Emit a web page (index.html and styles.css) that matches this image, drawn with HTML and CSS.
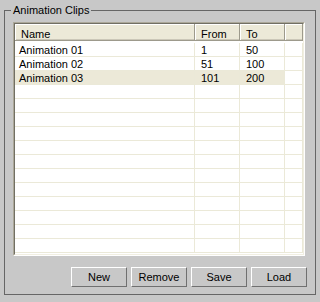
FILE: index.html
```html
<!DOCTYPE html>
<html>
<head>
<meta charset="utf-8">
<link rel="stylesheet" href="styles.css">
</head>
<body>
<fieldset class="group">
  <legend class="group-title">Animation Clips</legend>
  <div class="list">
    <div class="list-inner">
      <div class="hdr">
        <div class="hc c-name">Name</div>
        <div class="hc c-from">From</div>
        <div class="hc c-to">To</div>
        <div class="hc c-rest"></div>
      </div>
      <div class="rows">
        <div class="row"><div class="cell c-name first">Animation 01</div><div class="cell c-from">1</div><div class="cell c-to">50</div><div class="cell c-rest"></div></div>
        <div class="row"><div class="cell c-name first">Animation 02</div><div class="cell c-from">51</div><div class="cell c-to">100</div><div class="cell c-rest"></div></div>
        <div class="row sel"><div class="cell c-name first">Animation 03</div><div class="cell c-from">101</div><div class="cell c-to">200</div><div class="cell c-rest"></div></div>
        <div class="row"><div class="cell c-name"></div><div class="cell c-from"></div><div class="cell c-to"></div><div class="cell c-rest"></div></div>
        <div class="row"><div class="cell c-name"></div><div class="cell c-from"></div><div class="cell c-to"></div><div class="cell c-rest"></div></div>
        <div class="row"><div class="cell c-name"></div><div class="cell c-from"></div><div class="cell c-to"></div><div class="cell c-rest"></div></div>
        <div class="row"><div class="cell c-name"></div><div class="cell c-from"></div><div class="cell c-to"></div><div class="cell c-rest"></div></div>
        <div class="row"><div class="cell c-name"></div><div class="cell c-from"></div><div class="cell c-to"></div><div class="cell c-rest"></div></div>
        <div class="row"><div class="cell c-name"></div><div class="cell c-from"></div><div class="cell c-to"></div><div class="cell c-rest"></div></div>
        <div class="row"><div class="cell c-name"></div><div class="cell c-from"></div><div class="cell c-to"></div><div class="cell c-rest"></div></div>
        <div class="row"><div class="cell c-name"></div><div class="cell c-from"></div><div class="cell c-to"></div><div class="cell c-rest"></div></div>
        <div class="row"><div class="cell c-name"></div><div class="cell c-from"></div><div class="cell c-to"></div><div class="cell c-rest"></div></div>
        <div class="row"><div class="cell c-name"></div><div class="cell c-from"></div><div class="cell c-to"></div><div class="cell c-rest"></div></div>
        <div class="row"><div class="cell c-name"></div><div class="cell c-from"></div><div class="cell c-to"></div><div class="cell c-rest"></div></div>
        <div class="row"><div class="cell c-name"></div><div class="cell c-from"></div><div class="cell c-to"></div><div class="cell c-rest"></div></div>
      </div>
    </div>
  </div>
  <div class="buttons">
    <button class="btn">New</button>
    <button class="btn">Remove</button>
    <button class="btn">Save</button>
    <button class="btn">Load</button>
  </div>
</fieldset>
</body>
</html>
```
FILE: styles.css
```css
html, body {
  margin: 0;
  background: #c8c8c8;
}
body {
  padding: 4px 0 0 4px;
  font: 11px "Liberation Sans", Arial, sans-serif;
  color: #000;
  overflow: hidden;
  height: 302px;
  box-sizing: border-box;
}
.group {
  margin: 0;
  width: 312px;
  box-sizing: border-box;
  border: 1px solid #666;
  padding: 5px 8px 7px 8px;
  min-width: 0;
}
.group-title {
  padding: 0 2px;
  margin-left: -2px;
  line-height: 13px;
}
.list {
  width: 292px;
  height: 234px;
  box-sizing: border-box;
  border: 1px solid;
  border-color: #aca899 #fff #fff #aca899;
}
.list-inner {
  height: 100%;
  box-sizing: border-box;
  border: 1px solid;
  border-color: #716f64 #f1efe2 #f1efe2 #716f64;
  background: #fff;
  overflow: hidden;
}
.hdr {
  display: flex;
  height: 17px;
}
.hc {
  box-sizing: border-box;
  height: 17px;
  background: #ece9d8;
  border-right: 1px solid #9d9a8c;
  border-bottom: 1px solid #9d9a8c;
  box-shadow: inset 1px 1px #fff, inset 0 -1px #cbc7b8;
  padding: 4px 0 0 6px;
  line-height: 12px;
  white-space: nowrap;
}
.c-name { width: 180px; flex: none; }
.c-from { width: 45px; flex: none; }
.c-to { width: 45px; flex: none; }
.c-rest { flex: 1; }
.rows {
  padding-top: 2px;
}
.row {
  display: flex;
  height: 14px;
}
.cell {
  box-sizing: border-box;
  height: 14px;
  border-right: 1px solid #ebe9d8;
  border-bottom: 1px solid #ebe9d8;
  padding: 1px 0 0 6px;
  line-height: 13px;
  white-space: nowrap;
}
.cell.first {
  padding-left: 4px;
}
.row.sel .c-name,
.row.sel .c-from,
.row.sel .c-to {
  background: #ece9d8;
}
.buttons {
  display: flex;
  justify-content: flex-end;
  gap: 4px;
  margin-top: 11px;
}
.btn {
  width: 56px;
  height: 20px;
  box-sizing: border-box;
  padding: 0;
  margin: 0;
  font: 11px "Liberation Sans", Arial, sans-serif;
  color: #000;
  background: #c8c8c8;
  border: 1px solid;
  border-color: #fff #707070 #707070 #fff;
}
```
